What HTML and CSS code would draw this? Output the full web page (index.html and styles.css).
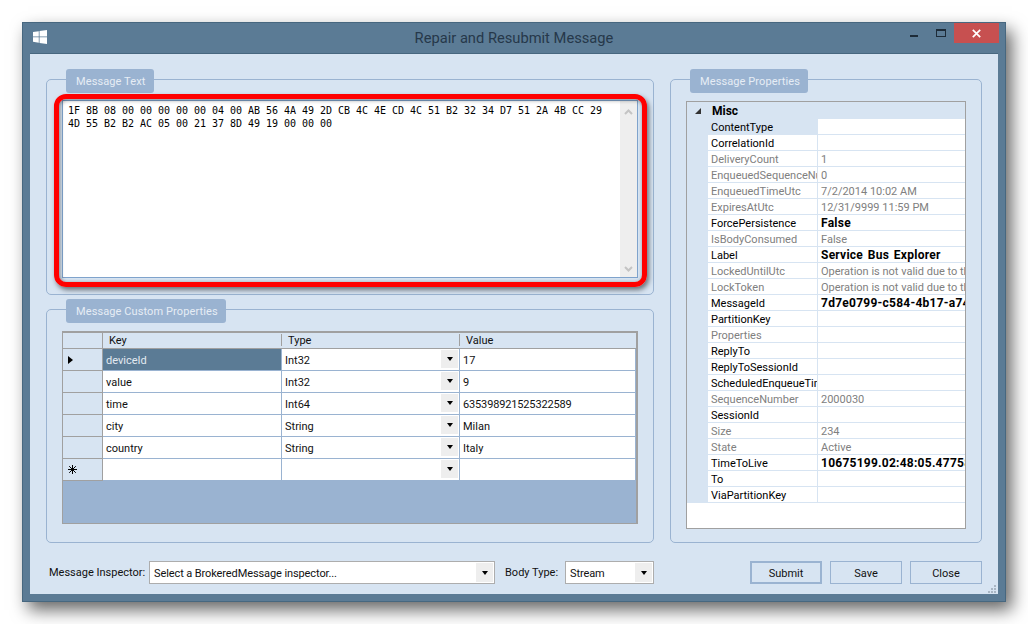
FILE: index.html
```html
<!DOCTYPE html>
<html lang="en">

<head>
    <meta charset="UTF-8">
    <title>Repair and Resubmit Message</title>
    <link rel="stylesheet" href="styles.css">
</head>

<body>
    <div class="window">
        <div class="titlebar">
            <svg class="logo" width="14" height="14" viewBox="0 0 15 15"><path fill="#fff" d="M0 2.200 6.200 1.300V7H0ZM7 1.200 15 0V7H7ZM0 7.900H6.200V13.600L0 12.700ZM7 7.900H15V15L7 13.800Z"/></svg>
            <div class="title">Repair and Resubmit Message</div>
            <div class="controls">
                <span class="btn-min"></span>
                <span class="btn-max"></span>
                <span class="btn-close">
                    <svg width="9" height="9" viewBox="0 0 9 9"><path stroke="#fff" stroke-width="1.7" d="M.8.8 8.200 8.200M8.200.8.8 8.200"/></svg>
                </span>
            </div>
        </div>

        <div class="client">
            <div class="left-col">
                <div class="group group-text">
                    <div class="tab">Message Text</div>
                    <div class="textbox">
                        <div class="hex">1F 8B 08 00 00 00 00 00 04 00 AB 56 4A 49 2D CB 4C 4E CD 4C 51 B2 32 34 D7 51 2A 4B CC 29<br>4D 55 B2 B2 AC 05 00 21 37 8D 49 19 00 00 00</div>
                        <div class="scrollbar">
                            <svg width="9" height="6" viewBox="0 0 9 6"><path fill="none" stroke="#c4c4c4" stroke-width="2" d="M1 5 4.500 1.500 8 5"/></svg>
                            <svg width="9" height="6" viewBox="0 0 9 6"><path fill="none" stroke="#c4c4c4" stroke-width="2" d="M1 1 4.500 4.500 8 1"/></svg>
                        </div>
                    </div>
                    <div class="highlight"></div>
                </div>

                <div class="group group-custom">
                    <div class="tab">Message Custom Properties</div>
                    <div class="datagrid">
                        <div class="dg-row dg-head">
                            <div class="rowhead"></div>
                            <div class="cell">Key</div>
                            <div class="cell">Type</div>
                            <div class="cell">Value</div>
                        </div>
                        <div class="dg-row">
                            <div class="rowhead"><span class="row-arrow"></span></div>
                            <div class="cell selected">deviceId</div>
                            <div class="cell">Int32<span class="drop"><i></i></span></div>
                            <div class="cell">17</div>
                        </div>
                        <div class="dg-row">
                            <div class="rowhead"></div>
                            <div class="cell">value</div>
                            <div class="cell">Int32<span class="drop"><i></i></span></div>
                            <div class="cell">9</div>
                        </div>
                        <div class="dg-row">
                            <div class="rowhead"></div>
                            <div class="cell">time</div>
                            <div class="cell">Int64<span class="drop"><i></i></span></div>
                            <div class="cell num">635398921525322589</div>
                        </div>
                        <div class="dg-row">
                            <div class="rowhead"></div>
                            <div class="cell">city</div>
                            <div class="cell">String<span class="drop"><i></i></span></div>
                            <div class="cell">Milan</div>
                        </div>
                        <div class="dg-row">
                            <div class="rowhead"></div>
                            <div class="cell">country</div>
                            <div class="cell">String<span class="drop"><i></i></span></div>
                            <div class="cell">Italy</div>
                        </div>
                        <div class="dg-row">
                            <div class="rowhead">
                                <svg class="star" width="9" height="9" viewBox="0 0 9 9"><path stroke="#000" d="M4.500 0V9M0 4.500H9M1.200 1.200 7.800 7.800M7.800 1.200 1.200 7.800"/></svg>
                            </div>
                            <div class="cell"></div>
                            <div class="cell"><span class="drop"><i></i></span></div>
                            <div class="cell"></div>
                        </div>
                    </div>
                </div>
            </div>

            <div class="group group-props">
                <div class="tab">Message Properties</div>
                <div class="propgrid">
                    <div class="prop-cat"><span class="cat-arrow"></span>Misc</div>
                    <div class="prop sel"><div class="name">ContentType</div><div class="val"></div></div>
                    <div class="prop"><div class="name">CorrelationId</div><div class="val"></div></div>
                    <div class="prop off"><div class="name">DeliveryCount</div><div class="val">1</div></div>
                    <div class="prop off"><div class="name">EnqueuedSequenceNumber</div><div class="val">0</div></div>
                    <div class="prop off"><div class="name">EnqueuedTimeUtc</div><div class="val">7/2/2014 10:02 AM</div></div>
                    <div class="prop off"><div class="name">ExpiresAtUtc</div><div class="val">12/31/9999 11:59 PM</div></div>
                    <div class="prop"><div class="name">ForcePersistence</div><div class="val bold">False</div></div>
                    <div class="prop off"><div class="name">IsBodyConsumed</div><div class="val">False</div></div>
                    <div class="prop"><div class="name">Label</div><div class="val bold">Service Bus Explorer</div></div>
                    <div class="prop off"><div class="name">LockedUntilUtc</div><div class="val">Operation is not valid due to the current state</div></div>
                    <div class="prop off"><div class="name">LockToken</div><div class="val">Operation is not valid due to the current state</div></div>
                    <div class="prop"><div class="name">MessageId</div><div class="val bold">7d7e0799-c584-4b17-a74a-000000000000</div></div>
                    <div class="prop"><div class="name">PartitionKey</div><div class="val"></div></div>
                    <div class="prop off"><div class="name">Properties</div><div class="val"></div></div>
                    <div class="prop"><div class="name">ReplyTo</div><div class="val"></div></div>
                    <div class="prop"><div class="name">ReplyToSessionId</div><div class="val"></div></div>
                    <div class="prop"><div class="name">ScheduledEnqueueTimeUtc</div><div class="val"></div></div>
                    <div class="prop off"><div class="name">SequenceNumber</div><div class="val">2000030</div></div>
                    <div class="prop"><div class="name">SessionId</div><div class="val"></div></div>
                    <div class="prop off"><div class="name">Size</div><div class="val">234</div></div>
                    <div class="prop off"><div class="name">State</div><div class="val">Active</div></div>
                    <div class="prop"><div class="name">TimeToLive</div><div class="val bold">10675199.02:48:05.4775807</div></div>
                    <div class="prop"><div class="name">To</div><div class="val"></div></div>
                    <div class="prop"><div class="name">ViaPartitionKey</div><div class="val"></div></div>
                </div>
            </div>

            <div class="bottom">
                <div class="inspector-label">Message Inspector:</div>
                <div class="combo combo-inspector">Select a BrokeredMessage inspector...<span class="drop"><i></i></span></div>
                <div class="body-label">Body Type:</div>
                <div class="combo combo-body">Stream<span class="drop"><i></i></span></div>
                <div class="buttons">
                    <div class="button default">Submit</div>
                    <div class="button">Save</div>
                    <div class="button">Close</div>
                </div>
            </div>

            <svg class="grip" width="9" height="9" viewBox="0 0 9 9"><path fill="#a9b6c4" d="M6 0H8V2H6ZM3 3H5V5H3ZM6 3H8V5H6ZM0 6H2V8H0ZM3 6H5V8H3ZM6 6H8V8H6Z"/></svg>
        </div>
    </div>
</body>

</html>
```
FILE: styles.css
```css
body {
    margin: 0;
    padding: 22px;
    width: 984px;
    height: 580px;
    overflow: hidden;
    background-color: #fff;
    font-family: "Roboto", "Liberation Sans", sans-serif;
    font-size: 11px;
    color: #111;
}

.window {
    box-sizing: border-box;
    width: 984px;
    height: 580px;
    padding: 0 7px 7px;
    display: flex;
    flex-direction: column;
    background-color: #5b7b95;
    border: 1px solid #47677f;
    box-shadow: 6px 8px 16px rgba(0, 0, 0, 0.6);
}

/* title bar */
.titlebar {
    height: 30px;
    flex: none;
    display: grid;
    grid-template-columns: 1fr auto 1fr;
}

.logo {
    margin: 7px 0 0 3px;
}

.title {
    font-size: 14.700px;
    line-height: 30px;
    color: #26384a;
}

.controls {
    display: flex;
    justify-content: flex-end;
    align-items: flex-start;
}

.btn-min {
    width: 8px;
    height: 2px;
    margin: 12px 18px 0 0;
    background-color: #1d2b38;
}

.btn-max {
    box-sizing: border-box;
    width: 10px;
    height: 8px;
    margin: 6px 8px 0 0;
    border: 1px solid #1d2b38;
    border-top-width: 2px;
}

.btn-close {
    width: 45px;
    height: 20px;
    margin-right: -1px;
    display: flex;
    align-items: center;
    justify-content: center;
    background-color: #c75050;
}

/* client area */
.client {
    position: relative;
    box-sizing: border-box;
    flex: 1;
    padding: 25px 16px 10px;
    display: grid;
    grid-template-columns: 608px 312px;
    grid-template-rows: 464px 23px;
    column-gap: 16px;
    row-gap: 18px;
    background-color: #d7e4f2;
    border-top: 1px solid #47677f;
}

.left-col {
    display: flex;
    flex-direction: column;
    gap: 14px;
}

.group {
    position: relative;
    box-sizing: border-box;
    border: 1px solid #9ab3d1;
    border-radius: 5px;
}

.group-text {
    height: 216px;
}

.group-custom {
    height: 234px;
}

.tab {
    box-sizing: border-box;
    height: 24px;
    margin: -11px 0 0 19px;
    padding-left: 10px;
    line-height: 26px;
    letter-spacing: 0.1px;
    background-color: #9ab3d1;
    border-radius: 3px;
    color: #e6edf5;
}

.group-text .tab {
    width: 88px;
}

.group-custom .tab {
    width: 160px;
}

.group-props .tab {
    width: 118px;
}

/* hex text box */
.textbox {
    box-sizing: border-box;
    width: 576px;
    height: 178px;
    margin: 7px 0 0 15px;
    display: flex;
    justify-content: space-between;
    background-color: #fff;
    border: 1px solid #7fa3cc;
}

.hex {
    padding: 3px 0 0 5px;
    font-family: "DejaVu Sans Mono", "Liberation Mono", monospace;
    font-size: 10px;
    letter-spacing: -0.02px;
    line-height: 13px;
    color: #000;
}

.scrollbar {
    width: 17px;
    padding: 8px 0 5px;
    display: flex;
    flex-direction: column;
    align-items: center;
    justify-content: space-between;
    background-color: #eee;
}

.highlight {
    position: absolute;
    left: 7px;
    top: 14px;
    box-sizing: border-box;
    width: 593px;
    height: 193px;
    border: 5px solid #f00;
    border-radius: 12px;
    box-shadow: 2px 3px 5px rgba(0, 0, 0, 0.5), inset 1px 1px 4px rgba(0, 0, 0, 0.45);
}

/* custom properties grid */
.datagrid {
    box-sizing: border-box;
    width: 576px;
    height: 193px;
    margin: 8px 0 0 15px;
    background-color: #9ab3d1;
    border: 1px solid #a0a0a0;
    border-width: 2px 2px 1px 1px;
}

.dg-row {
    display: grid;
    grid-template-columns: 40px 179px 178px 176px;
    grid-template-rows: 22px;
    height: 22px;
}

.dg-head {
    grid-template-rows: 15px;
    height: 16px;
    background-color: #d7e4f2;
    border-bottom: 1px solid #a0a0a0;
    box-sizing: border-box;
}

.dg-head .cell {
    padding-left: 6px;
    line-height: 16px;
    background-color: transparent;
    border: none;
}

.dg-head .cell + .cell::before {
    content: "";
    position: absolute;
    left: -1px;
    top: 1px;
    height: 12px;
    width: 1px;
    background-color: #a0a0a0;
}

.rowhead {
    box-sizing: border-box;
    display: flex;
    align-items: center;
    background-color: #d7e4f2;
    border-right: 1px solid #a0a0a0;
    border-bottom: 1px solid #a0a0a0;
}

.dg-head .rowhead {
    border-bottom: none;
}

.row-arrow {
    width: 0;
    height: 0;
    margin-left: 5px;
    border-left: 5px solid #000;
    border-top: 4px solid transparent;
    border-bottom: 4px solid transparent;
}

.star {
    margin-left: 5px;
}

.cell {
    position: relative;
    box-sizing: border-box;
    padding-left: 3px;
    line-height: 23px;
    background-color: #fff;
    border-right: 1px solid #9ab3d1;
    border-bottom: 1px solid #9ab3d1;
}

.cell.num {
    letter-spacing: -0.15px;
}

.cell.selected {
    background-color: #5b7b95;
    color: #e3eaf1;
}

.drop {
    position: absolute;
    right: 1px;
    top: 1px;
    bottom: 2px;
    width: 17px;
    display: flex;
    align-items: center;
    justify-content: center;
    background-color: #eee;
}

.drop i {
    width: 0;
    height: 0;
    border-top: 4px solid #000;
    border-left: 3.500px solid transparent;
    border-right: 3.500px solid transparent;
}

/* property grid */
.propgrid {
    box-sizing: border-box;
    width: 280px;
    height: 428px;
    margin: 8px 0 0 15px;
    overflow: hidden;
    background-color: #fff;
    border: 1px solid #a0a0a0;
}

.prop-cat {
    position: relative;
    height: 17px;
    padding-left: 25px;
    font-size: 12px;
    line-height: 18px;
    font-weight: bold;
    color: #000;
    background-color: #d7e4f2;
}

.cat-arrow {
    position: absolute;
    left: 8px;
    top: 6px;
    width: 0;
    height: 0;
    border-bottom: 6px solid #333;
    border-left: 6px solid transparent;
}

.prop {
    position: relative;
    display: grid;
    grid-template-columns: 110px 147px;
    height: 16px;
    margin-left: 21px;
    line-height: 17px;
    color: #000;
}

.prop::before {
    content: "";
    position: absolute;
    left: -21px;
    top: 0;
    width: 21px;
    height: 16px;
    background-color: #d7e4f2;
}

.name,
.val {
    box-sizing: border-box;
    overflow: hidden;
    white-space: nowrap;
    border-bottom: 1px solid #d7e4f2;
}

.name {
    padding-left: 3px;
    border-right: 1px solid #d7e4f2;
}

.val {
    padding-left: 3px;
}

.val.bold {
    font-size: 12px;
    font-weight: bold;
    letter-spacing: 0.25px;
    word-spacing: 1.500px;
    color: #000;
}

.prop.sel .name {
    background-color: #d7e4f2;
}

.prop.off {
    color: #808080;
}

/* bottom row */
.bottom {
    grid-column: 1 / 3;
    display: flex;
    align-items: center;
    white-space: nowrap;
}

.inspector-label {
    width: 103px;
    padding-left: 3px;
    box-sizing: border-box;
}

.combo {
    position: relative;
    box-sizing: border-box;
    height: 23px;
    padding-left: 4px;
    line-height: 23px;
    letter-spacing: -0.1px;
    background-color: #fff;
    border: 1px solid #adadad;
}

.combo .drop {
    right: 1px;
    top: 1px;
    bottom: 1px;
}

.combo-inspector {
    width: 346px;
}

.body-label {
    width: 70px;
    padding-left: 10px;
    box-sizing: border-box;
}

.combo-body {
    width: 89px;
}

.buttons {
    margin-left: auto;
    display: flex;
    gap: 8px;
}

.button {
    box-sizing: border-box;
    width: 72px;
    height: 23px;
    line-height: 23px;
    text-align: center;
    border: 1px solid #9ab3d1;
}

.button.default {
    line-height: 21px;
    border-width: 2px;
}

.grip {
    position: absolute;
    right: 1px;
    bottom: 0;
}
```
